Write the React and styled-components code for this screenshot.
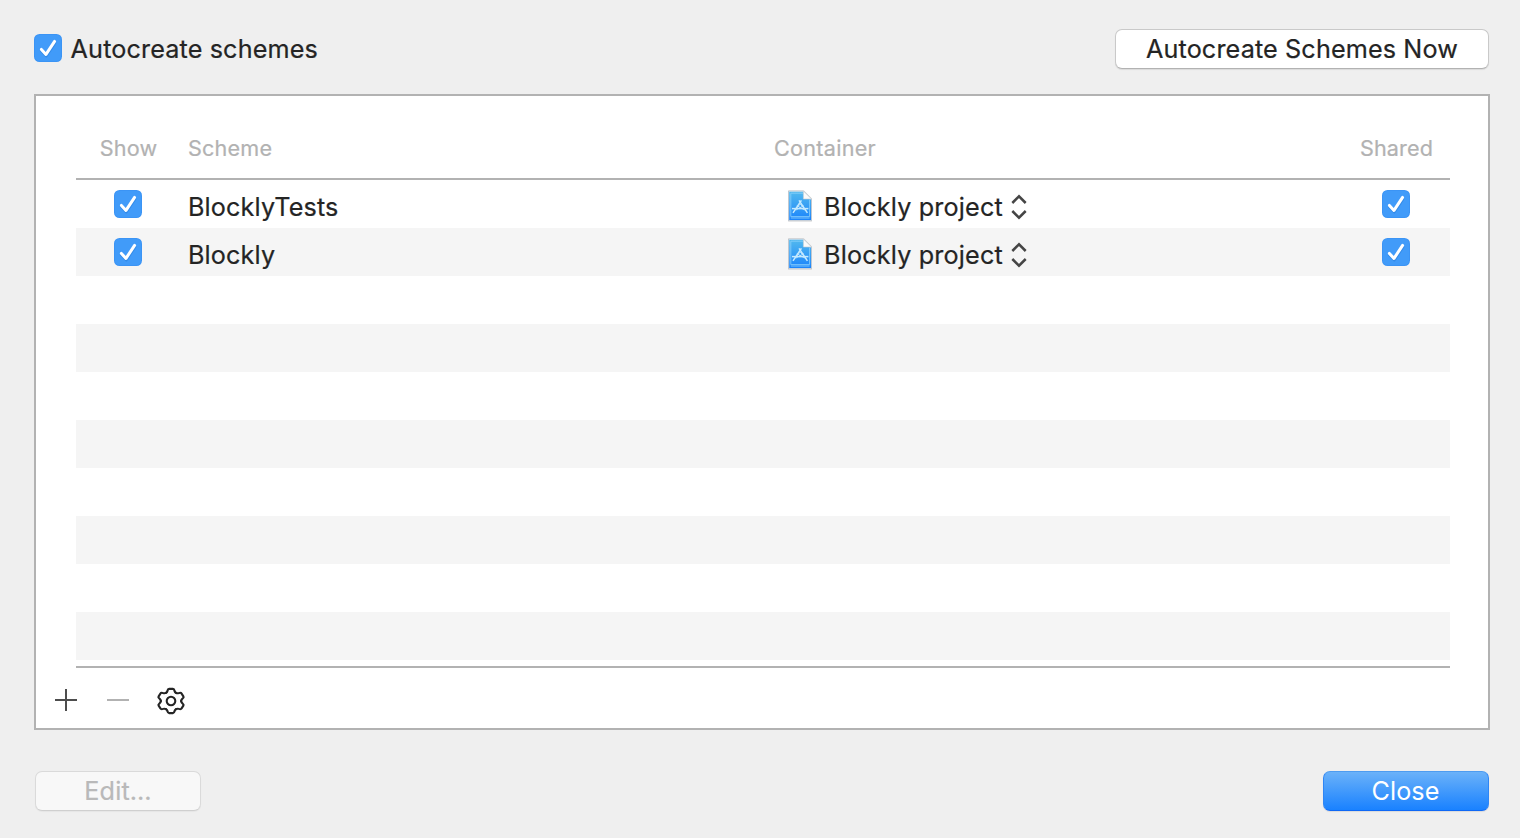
import React from "react";
import styled, { createGlobalStyle, css } from "styled-components";

const GlobalStyle = createGlobalStyle`
  *, *::before, *::after { box-sizing: border-box; }
  html, body { margin: 0; padding: 0; background: #efefef; }
  body { font-family: Inter, "Liberation Sans", sans-serif; color: #242424; }
`;

const Dialog = styled.main`
  width: 1520px;
  height: 838px;
  padding: 28px 30px 26px 34px;
  background: #efefef;
  display: flex;
  flex-direction: column;
`;

const TopBar = styled.header`
  height: 42px;
  margin-bottom: 24px;
  display: flex;
  justify-content: space-between;
  align-items: center;
`;

const Text = styled.span`
  font-size: ${(p) => p.$size || 25.2}px;
  letter-spacing: ${(p) => p.$spacing ?? 0.13}px;
  line-height: 32px;
  white-space: nowrap;
  -webkit-text-stroke: ${(p) => p.$stroke ?? 0.22}px currentColor;
`;

const CheckLabel = styled.div`
  display: flex;
  align-items: flex-start;
  gap: 8.6px;
  height: 30px;

  ${Text} { line-height: 30px; }
`;

const CheckSvg = styled.svg`
  display: block;
  flex: none;
  width: 28px;
  height: 28px;
`;

const Button = styled.button`
  width: ${(p) => p.$width}px;
  height: 40px;
  flex: none;
  padding: 0;
  margin: 0 1px;
  display: flex;
  align-items: center;
  justify-content: center;
  font-family: inherit;
  color: #242424;
  background: #ffffff;
  border: 1px solid #c9c9c9;
  border-bottom-color: #b2b2b2;
  border-radius: 7px;
  box-shadow: 0 1px 1px rgba(0, 0, 0, 0.09);
  ${(p) =>
    p.$kind === "disabled" &&
    css`
      color: #b9b9b9;
      background: #f8f8f8;
      border-color: #dadada;
      border-bottom-color: #cfcfcf;
      box-shadow: 0 1px 1px rgba(0, 0, 0, 0.04);
    `}
  ${(p) =>
    p.$kind === "primary" &&
    css`
      color: #ffffff;
      background: linear-gradient(#6db3f9, #1780ff) border-box;
      border-color: #4e9cf0 #2f86f5 #0f68f5;
      padding-right: 1px;
    `}
`;

const Panel = styled.section`
  height: 636px;
  width: 1456px;
  border: 2px solid #b2b2b2;
  background: #ffffff;
  padding: 34px 38px 0 40px;
  display: flex;
  flex-direction: column;
`;

const columns = css`
  display: grid;
  grid-template-columns: 104px 586px 576px 108px;
`;

const HeaderRow = styled.div`
  ${columns}
  height: 50px;
  flex: none;
  border-bottom: 2px solid #b2b2b2;
  color: #b2b2b2;
`;

const HeaderCell = styled.div`
  height: 36px;
  display: flex;
  align-items: center;
  justify-content: ${(p) => (p.$center ? "center" : "flex-start")};
  padding-left: ${(p) => (p.$center ? 1 : 8)}px;
`;

const Rows = styled.div`
  height: 488px;
  flex: none;
  border-bottom: 2px solid #b2b2b2;
`;

const Row = styled.div`
  ${columns}
  height: 48px;
  background: #ffffff;
  &:nth-child(even) { background: #f5f5f5; }
`;

const CheckCell = styled.div`
  display: flex;
  justify-content: center;
  padding-top: 10px;
`;

const NameCell = styled.div`
  display: flex;
  align-items: center;
  padding: 5px 0 0 8px;
`;

const ContainerCell = styled.div`
  display: flex;
  align-items: flex-start;
  padding: 8px 0 0 20px;

  ${Text} { margin: 3px 8px 0 10px; }
`;

const Tools = styled.footer`
  display: flex;
  align-items: center;
  height: 60px;
  gap: 26px;
  margin-left: -24px;
`;

const ToolButton = styled.button`
  display: flex;
  padding: 0;
  border: 0;
  background: none;
  margin-top: ${(p) => p.$drop || 4}px;
`;

const BottomBar = styled.footer`
  margin-top: 41px;
  display: flex;
  justify-content: space-between;
`;

function Checkbox() {
  return (
    <CheckSvg viewBox="0 0 28 28">
      <rect width="28" height="28" rx="5.5" fill="#3b94f5" />
      <rect x="1" y="1" width="26" height="26" rx="4.6" fill="#419bf9" />
      <path d="M7.4 16.8 L12.2 21.8 L20.8 8.8" fill="none" stroke="#2379d8" strokeOpacity=".5" strokeWidth="3" strokeLinecap="round" strokeLinejoin="round" />
      <path d="M7.4 15.4 L12 20.4 L20.6 7.4" fill="none" stroke="#fff" strokeWidth="3" strokeLinecap="round" strokeLinejoin="round" />
    </CheckSvg>
  );
}

function ProjectIcon() {
  return (
    <svg width="28" height="36" viewBox="0 0 28 36">
      <defs>
        <linearGradient id="sheet" x1="0" y1="0" x2="0" y2="1">
          <stop offset="0" stopColor="#52b9ee" />
          <stop offset="1" stopColor="#1b84fb" />
        </linearGradient>
      </defs>
      <path d="M2 2.5 H18 L26 10.5 V33.5 H2Z" fill="#000" opacity=".14" />
      <path d="M2.5 3 H17.5 L25.5 11 V32.7 H2.5Z" fill="#dfeefa" stroke="#b4bcc4" strokeWidth=".7" />
      <path d="M3.2 3.8 H17.4 L25 11.4 V32 H3.2Z" fill="url(#sheet)" />
      <path d="M4.8 5.2 H17 M23.6 11.5 V28.6 H4.8 V5.2 M4.8 30 H23.6" fill="none" stroke="#8dd2fc" strokeWidth=".8" />
      <path d="M17.4 3 V11 H25.5Z" fill="#fafafa" stroke="#c5cbd0" strokeWidth=".6" />
      <g fill="none" stroke="#c5eaff">
        <path d="M13 12.4 L21.4 24.8 M15.4 12.4 L7 24.8" strokeWidth="1.5" />
        <path d="M6 20.6 H22.4" strokeWidth="1.5" />
        <path d="M8.6 22.6 L14.2 16 L20 22.6 M10 22 L17.6 17.6 M10.8 17.6 L18.6 22" strokeWidth=".8" />
      </g>
    </svg>
  );
}

const ChevronBox = styled.span`
  display: flex;
  padding: 5px 0 0 0.5px;
`;

function Chevrons() {
  return (
    <ChevronBox>
      <svg width="16" height="28" viewBox="0 0 16 28">
        <path d="M1.3 10 L8 3.3 L14.7 10 M1.3 18 L8 24.7 L14.7 18" fill="none" stroke="#454545" strokeWidth="2.5" />
      </svg>
    </ChevronBox>
  );
}

function GearIcon() {
  return (
    <svg width="30" height="30" viewBox="-15 -15 30 30">
      <g fill="none" stroke="#242424" strokeWidth="2.1" strokeLinejoin="round" strokeLinecap="round">
        <g transform="scale(1.06 0.97)">
          {[0, 60, 120, 180, 240, 300].map((angle) => (
            <path
              key={angle}
              transform={`rotate(${angle})`}
              d="M-4.8-8.3 C-3.9-8.8 -3.6-9.5 -3.4-10.4 C-3.1-11.8 -2.7-12.5 -1.8-12.5 H1.8 C2.7-12.5 3.1-11.8 3.4-10.4 C3.6-9.5 3.9-8.8 4.8-8.3"
            />
          ))}
        </g>
        <circle r="4.3" />
      </g>
    </svg>
  );
}

const schemes = [{ name: "BlocklyTests" }, { name: "Blockly" }, ...Array(8).fill(null)];

export default function App() {
  return (
    <>
      <GlobalStyle />
      <Dialog>
        <TopBar>
          <CheckLabel>
            <Checkbox />
            <Text>Autocreate schemes</Text>
          </CheckLabel>
          <Button $width={374}><Text>Autocreate Schemes Now</Text></Button>
        </TopBar>
        <Panel>
          <HeaderRow>
            <HeaderCell $center><Text $size={21.6}>Show</Text></HeaderCell>
            <HeaderCell><Text $size={21.6} $spacing={0.2}>Scheme</Text></HeaderCell>
            <HeaderCell><Text $size={21.6} $spacing={0.28}>Container</Text></HeaderCell>
            <HeaderCell $center><Text $size={21.6}>Shared</Text></HeaderCell>
          </HeaderRow>
          <Rows>
            {schemes.map((scheme, i) => (
              <Row key={i}>
                {scheme && (
                  <>
                    <CheckCell><Checkbox /></CheckCell>
                    <NameCell><Text>{scheme.name}</Text></NameCell>
                    <ContainerCell>
                      <ProjectIcon />
                      <Text $spacing={0.17}>Blockly project</Text>
                      <Chevrons />
                    </ContainerCell>
                    <CheckCell><Checkbox /></CheckCell>
                  </>
                )}
              </Row>
            ))}
          </Rows>
          <Tools>
            <ToolButton aria-label="Add">
              <svg width="26" height="26" viewBox="0 0 26 26"><path d="M3 13 H25 M14 2 V24" stroke="#4d4d4d" strokeWidth="2" /></svg>
            </ToolButton>
            <ToolButton aria-label="Remove">
              <svg width="26" height="26" viewBox="0 0 26 26"><path d="M3 13 H25" stroke="#b2b2b2" strokeWidth="2" /></svg>
            </ToolButton>
            <ToolButton aria-label="Options" $drop={6}><GearIcon /></ToolButton>
          </Tools>
        </Panel>
        <BottomBar>
          <Button $width={166} $kind="disabled"><Text>Edit…</Text></Button>
          <Button $width={166} $kind="primary"><Text $stroke={0}>Close</Text></Button>
        </BottomBar>
      </Dialog>
    </>
  );
}
